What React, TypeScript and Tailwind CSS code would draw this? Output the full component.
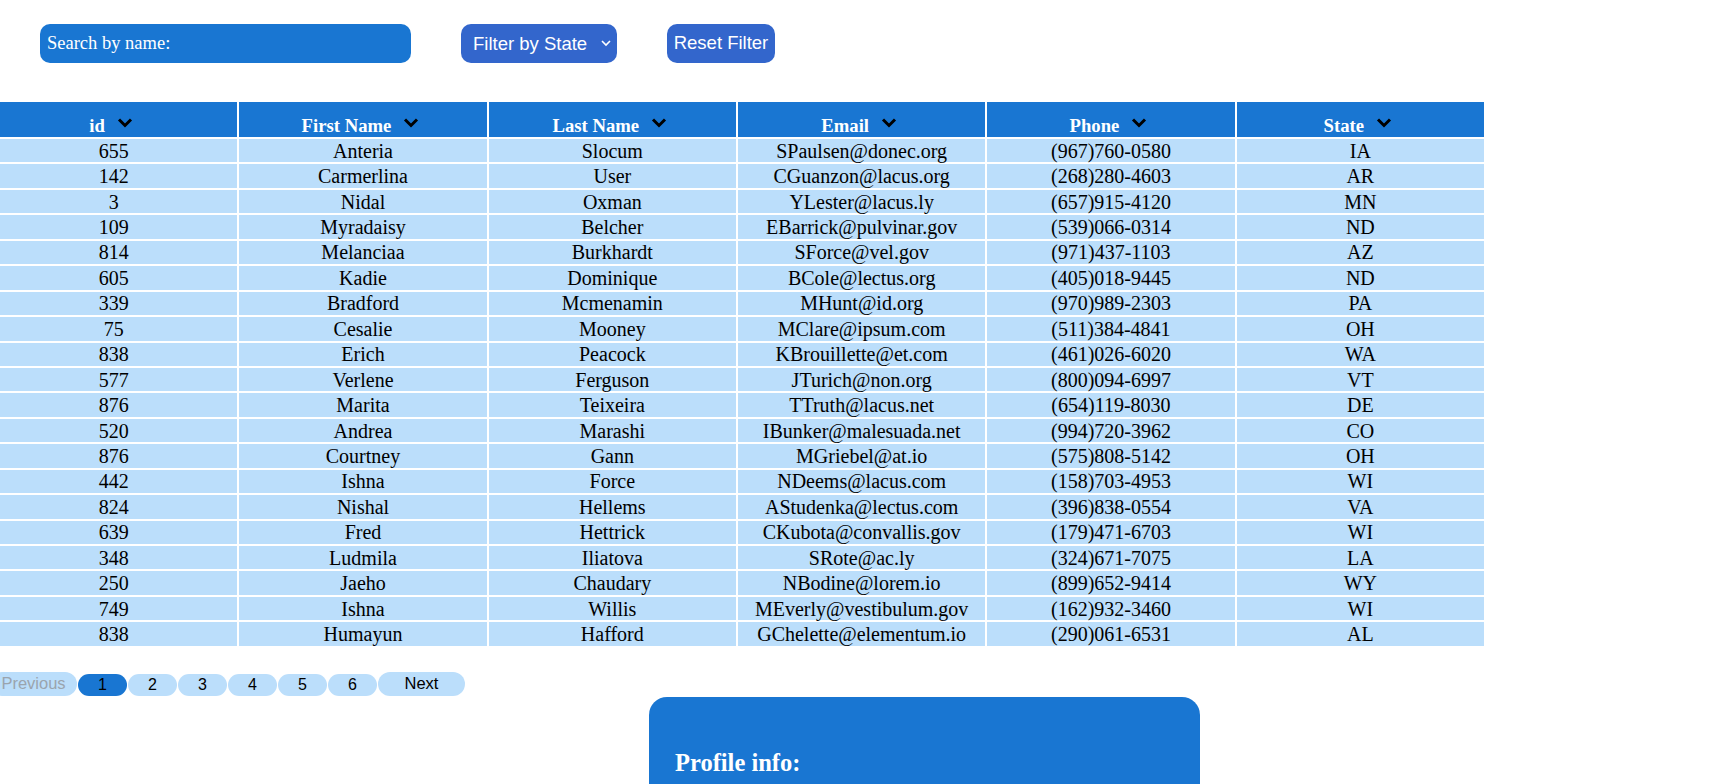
import React from "react";

const rows: [string, string, string, string, string, string][] = [
  ["655", "Anteria", "Slocum", "SPaulsen@donec.org", "(967)760-0580", "IA"],
  ["142", "Carmerlina", "User", "CGuanzon@lacus.org", "(268)280-4603", "AR"],
  ["3", "Nidal", "Oxman", "YLester@lacus.ly", "(657)915-4120", "MN"],
  ["109", "Myradaisy", "Belcher", "EBarrick@pulvinar.gov", "(539)066-0314", "ND"],
  ["814", "Melanciaa", "Burkhardt", "SForce@vel.gov", "(971)437-1103", "AZ"],
  ["605", "Kadie", "Dominique", "BCole@lectus.org", "(405)018-9445", "ND"],
  ["339", "Bradford", "Mcmenamin", "MHunt@id.org", "(970)989-2303", "PA"],
  ["75", "Cesalie", "Mooney", "MClare@ipsum.com", "(511)384-4841", "OH"],
  ["838", "Erich", "Peacock", "KBrouillette@et.com", "(461)026-6020", "WA"],
  ["577", "Verlene", "Ferguson", "JTurich@non.org", "(800)094-6997", "VT"],
  ["876", "Marita", "Teixeira", "TTruth@lacus.net", "(654)119-8030", "DE"],
  ["520", "Andrea", "Marashi", "IBunker@malesuada.net", "(994)720-3962", "CO"],
  ["876", "Courtney", "Gann", "MGriebel@at.io", "(575)808-5142", "OH"],
  ["442", "Ishna", "Force", "NDeems@lacus.com", "(158)703-4953", "WI"],
  ["824", "Nishal", "Hellems", "AStudenka@lectus.com", "(396)838-0554", "VA"],
  ["639", "Fred", "Hettrick", "CKubota@convallis.gov", "(179)471-6703", "WI"],
  ["348", "Ludmila", "Iliatova", "SRote@ac.ly", "(324)671-7075", "LA"],
  ["250", "Jaeho", "Chaudary", "NBodine@lorem.io", "(899)652-9414", "WY"],
  ["749", "Ishna", "Willis", "MEverly@vestibulum.gov", "(162)932-3460", "WI"],
  ["838", "Humayun", "Hafford", "GChelette@elementum.io", "(290)061-6531", "AL"],
];

const headers = ["id", "First Name", "Last Name", "Email", "Phone", "State"];

function Chevron() {
  return (
    <svg width="16" height="10" viewBox="0 0 16 10" className="shrink-0">
      <polyline points="2,1.5 8,7.5 14,1.5" fill="none" stroke="#000" strokeWidth="3" strokeLinecap="butt" strokeLinejoin="miter" />
    </svg>
  );
}

function SmallChevron() {
  return (
    <svg width="10" height="7" viewBox="0 0 10 7" className="shrink-0">
      <polyline points="1,1 5,5 9,1" fill="none" stroke="#fff" strokeWidth="1.6" />
    </svg>
  );
}

export default function App() {
  return (
    <div className="min-h-screen bg-white overflow-hidden">
      {/* Controls */}
      <div className="flex items-center pt-[24px] pl-[40px]">
        <div className="w-[371px] h-[39px] rounded-[10px] bg-[#1976d2] flex items-center pl-[7px] text-white text-[18.5px] font-['Liberation_Serif',serif]">
          Search by name:
        </div>
        <div className="ml-[50px] w-[156px] h-[39px] rounded-[10px] bg-[#3366cc] flex items-center pl-[12px] pr-[6px] text-white text-[18.5px] font-['Liberation_Sans',Arial,sans-serif]">
          <span className="flex-1">Filter by State</span>
          <SmallChevron />
        </div>
        <div className="ml-[50px] w-[108px] h-[39px] rounded-[10px] bg-[#3366cc] flex items-center justify-center pb-[2px] text-white text-[18.5px] font-['Liberation_Sans',Arial,sans-serif]">
          Reset Filter
        </div>
      </div>

      {/* Table */}
      <div className="mt-[39px] -ml-[10px] w-[1494px] grid grid-cols-6 gap-[2px] font-['Liberation_Serif',serif]">
        {headers.map((h) => (
          <div key={h} className="h-[35px] bg-[#1976d2] flex items-end justify-center pb-0 pr-[5px] gap-[12px]">
            <span className="text-white font-bold text-[18.7px] leading-[22px]">{h}</span>
            <span className="mb-[9px]">
              <Chevron />
            </span>
          </div>
        ))}
        {rows.map((r, i) =>
          r.map((c, j) => (
            <div key={i + "-" + j} className="h-[23.45px] bg-[#bbdefb] flex items-center justify-center text-black text-[20px] leading-[22px] whitespace-nowrap">
              {c}
            </div>
          ))
        )}
      </div>

      {/* Pagination */}
      <div className="mt-[26px] -ml-[10px] flex items-end gap-[1px] font-['Liberation_Sans',Arial,sans-serif]">
        <div className="w-[87px] h-[24px] rounded-[12px] bg-[#bbdefb] flex items-center justify-center text-[16.5px] text-[#9aa4ae]">
          Previous
        </div>
        {["1", "2", "3", "4", "5", "6"].map((p) => (
          <div
            key={p}
            className={
              p === "1"
                ? "w-[49px] h-[22px] rounded-[11px] bg-[#1976d2] flex items-center justify-center text-[16px] text-black pt-[1px]"
                : "w-[49px] h-[22px] rounded-[11px] bg-[#bbdefb] flex items-center justify-center text-[16px] text-black pt-[1px]"
            }
          >
            {p}
          </div>
        ))}
        <div className="w-[87px] h-[24px] rounded-[12px] bg-[#bbdefb] flex items-center justify-center text-[16.5px] text-black">
          Next
        </div>
      </div>

      {/* Profile card */}
      <div className="mt-[1px] ml-[649px] w-[551px] h-[240px] rounded-[18px] bg-[#1976d2] pt-[52px] pl-[26px]">
        <h2 className="text-white font-bold text-[24.5px] leading-[28px] font-['Liberation_Serif',serif]">Profile info:</h2>
      </div>
    </div>
  );
}
